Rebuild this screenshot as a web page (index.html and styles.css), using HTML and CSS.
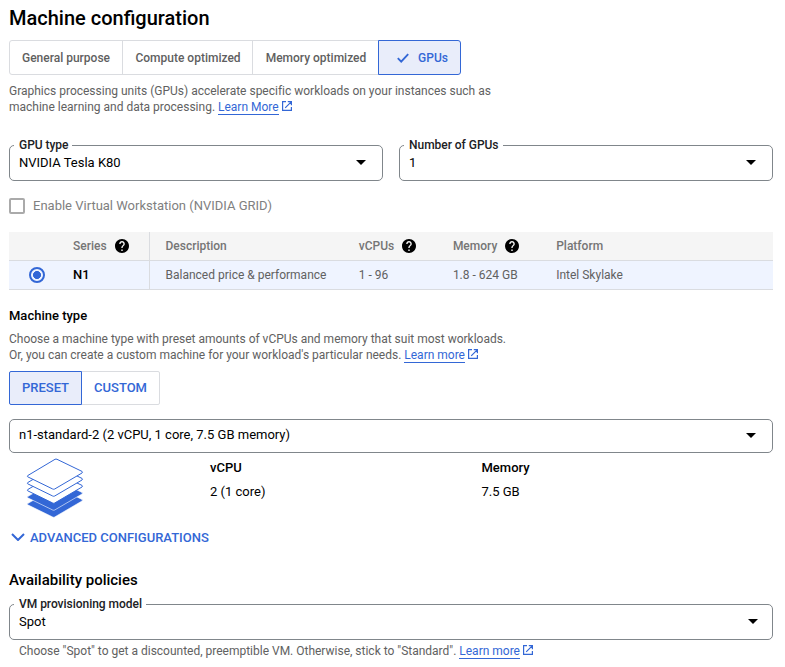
FILE: index.html
```html
<!DOCTYPE html>
<html lang="en">
<head>
<meta charset="utf-8">
<title>Machine configuration</title>
<link rel="stylesheet" href="styles.css">
</head>
<body>
<svg width="0" height="0" class="defs">
  <symbol id="open" viewBox="0 0 10 10"><path d="M4 .6H.6v8.8h8.8V6M5.8.6h3.6v3.6M9.2.8L3.2 6.8" fill="none" stroke="currentColor" stroke-width="1.2"/></symbol>
  <symbol id="help" viewBox="2 2 20 20"><path d="M12 2C6.48 2 2 6.48 2 12s4.480 10 10 10 10-4.480 10-10S17.520 2 12 2zm1 17h-2v-2h2v2zm2.070-7.750l-.9.920C13.450 12.900 13 13.500 13 15h-2v-.5c0-1.100.450-2.100 1.170-2.830l1.240-1.260c.370-.360.590-.860.590-1.410 0-1.100-.9-2-2-2s-2 .9-2 2H8c0-2.210 1.790-4 4-4s4 1.790 4 4c0 .880-.360 1.680-.930 2.250z"/></symbol>
</svg>
<main class="page">
  <h1>Machine configuration</h1>
  <div class="tabs">
    <button class="tab general">General purpose</button>
    <button class="tab compute">Compute optimized</button>
    <button class="tab memory">Memory optimized</button>
    <button class="tab gpus active"><svg class="check" viewBox="0 0 12 10"><path d="M.8 5.200L4.200 8.600 11.200 1.200" fill="none" stroke="currentColor" stroke-width="1.900"/></svg>GPUs</button>
  </div>
  <p class="text intro">Graphics processing units (GPUs) accelerate specific workloads on your instances such as<br>machine learning and data processing. <a>Learn More</a><svg class="open"><use href="#open"/></svg></p>

  <div class="fields">
    <div class="select"><span class="label">GPU type</span><span class="value">NVIDIA Tesla K80</span><i class="arrow"></i></div>
    <div class="select"><span class="label">Number of GPUs</span><span class="value">1</span><i class="arrow"></i></div>
  </div>
  <label class="option"><span class="box"></span><span class="caption">Enable Virtual Workstation (NVIDIA GRID)</span></label>

  <div class="table">
    <div class="row head">
      <div class="series">Series<svg class="help"><use href="#help"/></svg></div>
      <div class="desc">Description</div>
      <div>vCPUs<svg class="help"><use href="#help"/></svg></div>
      <div>Memory<svg class="help"><use href="#help"/></svg></div>
      <div>Platform</div>
    </div>
    <div class="row chosen">
      <div class="series"><span class="radio"></span><b>N1</b></div>
      <div class="desc">Balanced price &amp; performance</div>
      <div>1 - 96</div>
      <div>1.8 - 624 GB</div>
      <div>Intel Skylake</div>
    </div>
  </div>

  <h3>Machine type</h3>
  <p class="text type">Choose a machine type with preset amounts of vCPUs and memory that suit most workloads.<br>Or, you can create a custom machine for your workload's particular needs. <a>Learn more</a><svg class="open"><use href="#open"/></svg></p>
  <div class="toggle"><button class="preset active">PRESET</button><button class="custom">CUSTOM</button></div>
  <div class="select machine"><span class="value">n1-standard-2 (2 vCPU, 1 core, 7.5 GB memory)</span><i class="arrow"></i></div>

  <div class="specs">
    <svg class="stack" viewBox="0 0 58 61">
      <defs><path id="layer" d="M1.700 17.600L29 1.300Q30 .8 31 1.300L56 13.400Q57 14 56 15L28.700 31Q27.700 31.500 26.700 31L1.700 18.800Q1 18.200 1.700 17.600Z"/></defs>
      <use class="solid" href="#layer" y="28"/>
      <use class="solid" href="#layer" y="21"/>
      <use class="sheet" href="#layer" y="14"/>
      <use class="sheet" href="#layer" y="7"/>
      <use class="sheet" href="#layer"/>
    </svg>
    <div class="spec"><b>vCPU</b><span>2 (1 core)</span></div>
    <div class="spec"><b>Memory</b><span>7.5 GB</span></div>
  </div>
  <div class="advanced"><svg viewBox="0 0 14 8"><path d="M1 1l6 6 6-6" fill="none" stroke="currentColor" stroke-width="2"/></svg><span>ADVANCED CONFIGURATIONS</span></div>

  <h2>Availability policies</h2>
  <div class="select model"><span class="label">VM provisioning model</span><span class="value">Spot</span><i class="arrow"></i></div>
  <p class="text hint">Choose "Spot" to get a discounted, preemptible VM. Otherwise, stick to "Standard". <a>Learn more</a><svg class="open"><use href="#open"/></svg></p>
</main>
</body>
</html>
```
FILE: styles.css
```css
* { box-sizing: border-box; }
body { margin: 0; background: #fff; color: #000; font-family: Roboto, sans-serif; font-size: 13px; }
.defs { display: block; }
.page { display: flex; flex-direction: column; width: 773px; height: 667px; padding: 6px 0 0 9px; overflow: hidden; }
h1, h2, h3, p { margin: 0; }
h1 { font-size: 20px; font-weight: 500; line-height: 24px; }
b { font-weight: 500; }
button { margin: 0; padding: 0; border: 1px solid #dadce0; background: #fff; color: #5f5f5f; font-family: inherit; font-size: 12px; font-weight: 500; }
.tabs { display: flex; height: 35px; margin-top: 10px; }
.tab + .tab { margin-left: -1px; }
.general { width: 114px; border-radius: 3px 0 0 3px; }
.compute { width: 131px; padding-left: 1px; }
.memory { width: 127px; padding-left: 1px; }
.gpus { width: 83px; display: flex; align-items: center; justify-content: center; gap: 9px; padding-left: 6px; border-radius: 0 3px 3px 0; }
.check { width: 12px; height: 10px; }
button.active { position: relative; border-color: #3367d6; background: #e9edfa; color: #3367d6; }
.text { font-size: 12px; line-height: 16px; color: #616161; white-space: nowrap; letter-spacing: -.005px; }
.intro { margin-top: 8px; }
a { color: #3367d6; border-bottom: 1px solid #3367d6; }
.open { width: 10px; height: 10px; margin-left: 3.500px; color: #3367d6; }
.fields { display: grid; grid-template-columns: 374px 374px; gap: 16px; margin-top: 30px; }
.select { position: relative; display: flex; align-items: center; justify-content: space-between; height: 36px; padding: 0 16px 2px 9px; border: 1px solid #80868b; border-radius: 5px; }
.label { position: absolute; left: 4px; top: -9px; padding: 0 4px 0 5px; background: #fff; color: #202124; font-size: 12px; line-height: 16px; font-weight: 500; letter-spacing: -.03px; }
.arrow { margin-top: 1px; border: 5px solid transparent; border-top-color: #000; border-bottom: 0; }
.option { display: flex; align-items: center; gap: 8px; height: 16px; margin-top: 17px; color: #808080; }
.caption { padding-bottom: 2px; }
.box { width: 16px; height: 16px; border: 2px solid #aaa; border-radius: 2px; }
.table { margin-top: 18px; font-size: 12px; color: #616161; }
.row { display: grid; grid-template-columns: 141px 208.700px 94.200px 103.300px 1fr; height: 29px; border-bottom: 1px solid #dadce0; background: #f5f5f5; }
.row > div { display: flex; align-items: center; }
.head { font-weight: 500; color: #757575; }
.series { padding-left: 64px; border-right: 1px solid #dadce0; color: inherit; }
.row .desc { padding-left: 15.500px; }
.help { width: 14px; height: 14px; margin-left: 8px; fill: #000; }
.row.chosen { background: #eff4ff; }
.chosen .series { padding-left: 20px; gap: 28px; color: #000; font-size: 13px; }
.chosen b { padding-bottom: 2px; }
.radio { width: 16px; height: 16px; border: 2px solid #3367d6; border-radius: 50%; background: radial-gradient(circle, #3367d6 3.700px, transparent 4.300px); }
h3 { margin-top: 18px; font-size: 13px; line-height: 16px; font-weight: 500; }
.type { margin-top: 7px; }
.toggle { display: flex; height: 34px; margin-top: 8px; }
.toggle button { padding-bottom: 2px; color: #3367d6; font-size: 13px; }
.preset { width: 73px; border-radius: 2px 0 0 2px; }
.custom { width: 79px; margin-left: -1px; border-radius: 0 2px 2px 0; }
.machine { height: 34px; margin-top: 14px; padding-bottom: 3px; }
.specs { display: grid; grid-template-columns: 201px 271.500px 1fr; height: 64px; margin-top: 5px; }
.stack { width: 58px; height: 61px; margin-left: 17px; }
.solid { fill: #3367d6; stroke: #fff; stroke-width: .6; }
.sheet { fill: #fff; stroke: #3367d6; stroke-width: 1; }
.spec { display: flex; flex-direction: column; gap: 8px; padding-top: 2px; line-height: 16px; }
.advanced { display: flex; align-items: center; gap: 5px; height: 16px; margin-top: 7px; padding-left: 2px; color: #3367d6; font-weight: 500; }
.advanced svg { width: 14px; height: 8px; }
h2 { margin-top: 25px; font-size: 15px; line-height: 20px; font-weight: 500; }
.model { margin-top: 14px; padding-right: 14px; }
.hint { margin: 3px 0 0 10px; }
```
